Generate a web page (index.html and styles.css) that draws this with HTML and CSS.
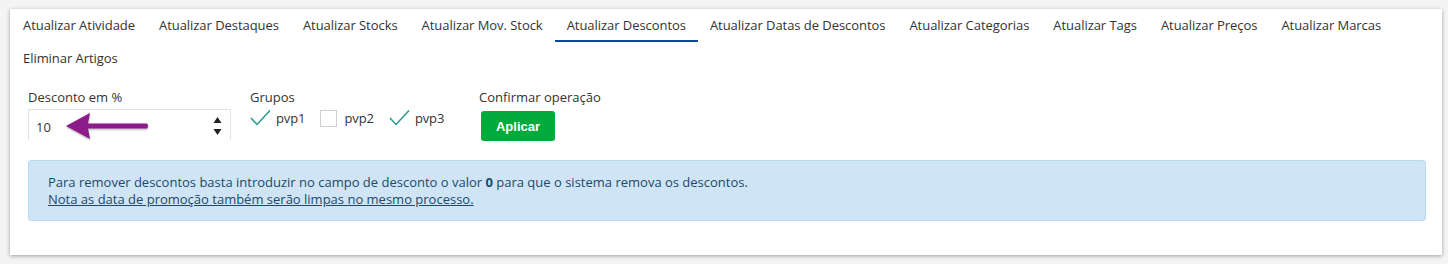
FILE: index.html
```html
<!DOCTYPE html>
<html lang="pt">
<head>
<meta charset="utf-8">
<title>Atualizar Descontos</title>
<link rel="stylesheet" href="styles.css">
</head>
<body>
<div class="panel">
  <ul class="tabs">
    <li class="tab">Atualizar Atividade</li>
    <li class="tab">Atualizar Destaques</li>
    <li class="tab">Atualizar Stocks</li>
    <li class="tab">Atualizar Mov. Stock</li>
    <li class="tab active">Atualizar Descontos</li>
    <li class="tab">Atualizar Datas de Descontos</li>
    <li class="tab">Atualizar Categorias</li>
    <li class="tab">Atualizar Tags</li>
    <li class="tab">Atualizar Preços</li>
    <li class="tab">Atualizar Marcas</li>
    <li class="tab">Eliminar Artigos</li>
  </ul>

  <div class="form-row">
    <div class="group group-discount">
      <label class="label">Desconto em %</label>
      <div class="number-field">
        <input class="number-input" type="text" value="10">
        <div class="spinner">
          <svg width="9" height="20" viewBox="0 0 9 20"><path d="M4.5 1 L8.5 7 L0.5 7 Z" fill="#222"/><path d="M0.5 13 L8.5 13 L4.5 19 Z" fill="#222"/></svg>
        </div>
        <svg class="annot-arrow" width="86" height="30" viewBox="0 0 86 30">
          <defs>
            <filter id="sh" x="-10%" y="-30%" width="130%" height="170%">
              <feDropShadow dx="0" dy="1" stdDeviation="0.8" flood-color="#000" flood-opacity="0.35"/>
            </filter>
          </defs>
          <g filter="url(#sh)" fill="#8b1a89">
            <path d="M0 14 L24 1 L22 11.5 L81 11.5 Q83 14 81 16.5 L22 16.5 L24 27 Z"/>
          </g>
        </svg>
      </div>
    </div>

    <div class="group group-groups">
      <label class="label">Grupos</label>
      <div class="checks">
        <span class="check-item">
          <svg class="tick" width="21" height="17" viewBox="0 0 21 17"><path d="M1 9 L7 15.5 L20 1.5" fill="none" stroke="#1f9b8c" stroke-width="1.5"/></svg>
          <span class="check-text">pvp1</span>
        </span>
        <span class="check-item">
          <span class="box"></span>
          <span class="check-text">pvp2</span>
        </span>
        <span class="check-item">
          <svg class="tick" width="21" height="17" viewBox="0 0 21 17"><path d="M1 9 L7 15.5 L20 1.5" fill="none" stroke="#1f9b8c" stroke-width="1.5"/></svg>
          <span class="check-text">pvp3</span>
        </span>
      </div>
    </div>

    <div class="group group-confirm">
      <label class="label">Confirmar operação</label>
      <button class="btn-apply" type="button">Aplicar</button>
    </div>
  </div>

  <div class="alert">
    <p>Para remover descontos basta introduzir no campo de desconto o valor <strong>0</strong> para que o sistema remova os descontos.</p>
    <p><u>Nota as data de promoção também serão limpas no mesmo processo.</u></p>
  </div>
</div>
</body>
</html>
```

FILE: styles.css
```css
* { box-sizing: border-box; }

html, body {
  margin: 0;
  padding: 0;
}

body {
  background: #f4f4f4;
  font-family: "Open Sans", "Noto Sans", sans-serif;
  font-size: 13px;
  color: #333;
  padding: 9px 6px 9px 10px;
}

.panel {
  background: #fff;
  width: 1432px;
  height: 246px;
  box-shadow: 0 1px 4px rgba(0, 0, 0, 0.35);
}

.tabs {
  list-style: none;
  margin: 0;
  padding: 0 0 0 1px;
  display: flex;
  flex-wrap: wrap;
}

.tab {
  height: 33px;
  line-height: 30px;
  padding: 1px 12px 0;
  border-bottom: 2px solid transparent;
  color: #333;
  white-space: nowrap;
  letter-spacing: -0.05px;
}

.tab.active {
  border-bottom-color: #0d47a1;
}

.form-row {
  display: flex;
  padding: 13px 0 0 18px;
}

.group {
  display: flex;
  flex-direction: column;
}

.label {
  line-height: 18px;
  margin-bottom: 3px;
  color: #333;
}

.group-discount {
  width: 203px;
  margin-right: 19px;
}

.group-groups {
  width: 229px;
}

.number-field {
  position: relative;
  display: flex;
  align-items: center;
  height: 31px;
  border: 1px solid #e2e2e2;
  border-bottom: none;
}

.number-input {
  flex: 1;
  min-width: 0;
  border: none;
  outline: none;
  background: transparent;
  font-family: "Open Sans", "Noto Sans", sans-serif;
  font-size: 13px;
  color: #333;
  padding: 3px 0 0 7px;
  height: 100%;
}

.spinner {
  width: 22px;
  display: flex;
  align-items: center;
  justify-content: center;
  padding-right: 4px;
  padding-top: 2px;
}

.spinner svg { display: block; }

.annot-arrow {
  position: absolute;
  left: 37px;
  top: 2px;
}

.checks {
  display: flex;
  align-items: center;
  height: 18px;
}

.check-item {
  display: flex;
  align-items: center;
  margin-right: 15px;
}

.tick {
  display: block;
  margin-right: 5px;
  margin-top: -1px;
}

.box {
  display: block;
  width: 17px;
  height: 17px;
  border: 1px solid #cfcfcf;
  margin-right: 7px;
}

.check-text {
  line-height: 18px;
  color: #333;
  letter-spacing: -0.1px;
}

.btn-apply {
  margin: 2px 0 0 2px;
  width: 74px;
  height: 30px;
  background: #00ab3c;
  color: #fff;
  border: none;
  border-radius: 3px;
  font-family: "Liberation Sans", Arial, sans-serif;
  font-size: 13px;
  font-weight: 600;
  padding: 0;
  cursor: pointer;
}

.alert {
  margin: 19px 16px 0 18px;
  height: 61px;
  background: #cfe5f5;
  border: 1px solid #b9daf0;
  border-radius: 3px;
  padding: 13px 19px 0 19px;
  color: #21486a;
}

.alert p {
  margin: 0;
  line-height: 17px;
}

.alert strong {
  font-weight: 700;
}
```
